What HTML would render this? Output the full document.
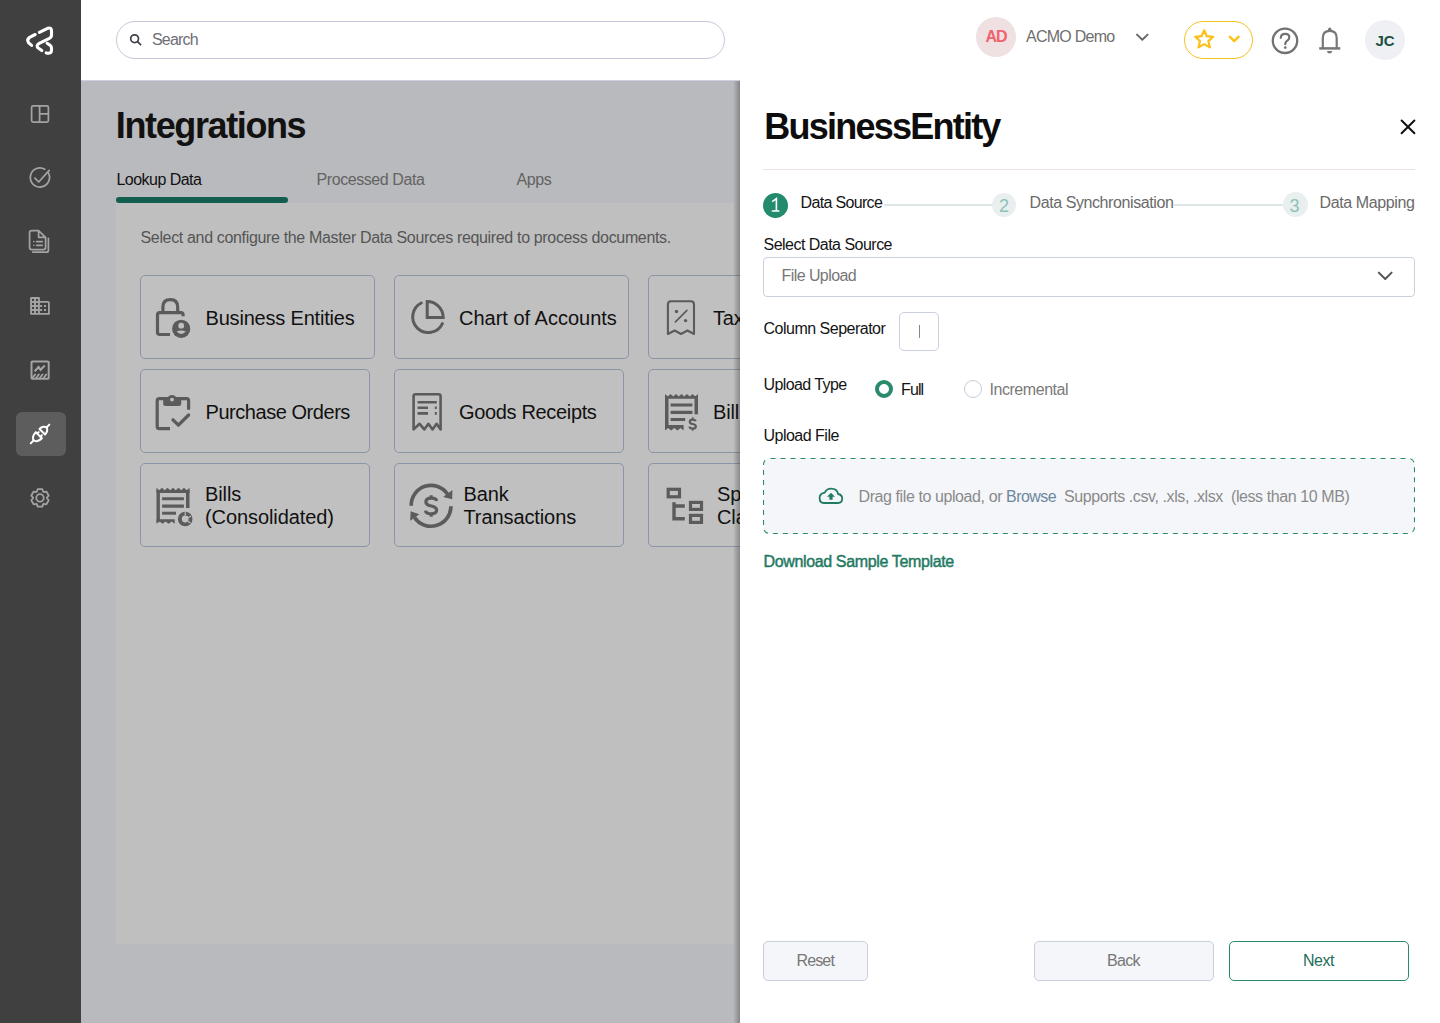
<!DOCTYPE html>
<html><head><meta charset="utf-8">
<style>
*{box-sizing:border-box;margin:0;padding:0}
html,body{width:1440px;height:1023px;overflow:hidden;background:#fff;font-family:"Liberation Sans",sans-serif;}
.a{position:absolute}
.t{position:absolute;white-space:pre;line-height:1;font-family:"Liberation Sans",sans-serif}
#side{left:0;top:0;width:81px;height:1023px;background:#404040}
#head{left:81px;top:0;width:1359px;height:81px;background:#fff;border-bottom:1px solid #cbd1e2}
#main{left:81px;top:81px;width:659px;height:942px;background:#b9babd}
#card{left:116px;top:203px;width:618px;height:741px;background:#bfbfbf}
.tile{position:absolute;border:1px solid #8c95a8;border-radius:5px;background:#c0c0c0;height:84px}
.ttx{position:absolute;white-space:pre;line-height:1;font-size:20px;color:#111}
#drawer{left:740px;top:80px;width:700px;height:943px;background:#fff}
#shadow{left:733px;top:81px;width:7px;height:942px;background:linear-gradient(to right,rgba(0,0,0,0) 0%,rgba(0,0,0,0.03) 14%,rgba(0,0,0,0.12) 43%,rgba(0,0,0,0.2) 71%,rgba(0,0,0,0.28) 100%)}
.lbl{font-size:16px;color:#141414;letter-spacing:-0.52px}
.btn{position:absolute;top:941px;height:40px;border-radius:5px;border:1px solid #c9cede;background:#f5f6fa}
</style></head><body>

<!-- SIDEBAR -->
<div id="side" class="a"></div>

<!-- HEADER -->
<div id="head" class="a"></div>
<div class="a" style="left:116px;top:21px;width:609px;height:38px;border:1px solid #c5cadb;border-radius:19px"></div>
<div class="t" style="left:152px;top:31.7px;font-size:16px;color:#6e6e76;letter-spacing:-0.8px">Search</div>

<div class="a" style="left:976px;top:17px;width:40px;height:40px;border-radius:50%;background:#efe0e1"></div>
<div class="t" style="left:985.5px;top:29.3px;font-size:16px;font-weight:700;color:#f0626c;letter-spacing:-1px">AD</div>
<div class="t" style="left:1026px;top:28.9px;font-size:16px;color:#6f6f6f;letter-spacing:-0.75px">ACMO Demo</div>

<div class="a" style="left:1184px;top:21px;width:69px;height:38px;border:1px solid #f4c21e;border-radius:19px"></div>
<div class="a" style="left:1365px;top:20px;width:40px;height:40px;border-radius:50%;background:#eef0f4"></div>
<div class="t" style="left:1375.5px;top:32.6px;font-size:15px;font-weight:700;color:#1d4f42;letter-spacing:-0.1px">JC</div>

<!-- MAIN -->
<div id="main" class="a"></div>
<div id="card" class="a"></div>
<div class="t" style="left:115.8px;top:108.2px;font-size:36px;font-weight:700;color:#121212;letter-spacing:-1.38px">Integrations</div>
<div class="t" style="left:116.5px;top:172px;font-size:16px;color:#111;letter-spacing:-0.54px">Lookup Data</div>
<div class="t" style="left:316.5px;top:172px;font-size:16px;color:#636363;letter-spacing:-0.42px">Processed Data</div>
<div class="t" style="left:516.5px;top:172px;font-size:16px;color:#636363;letter-spacing:-0.37px">Apps</div>
<div class="a" style="left:116px;top:197px;width:172px;height:6px;border-radius:3px;background:#135f4f"></div>
<div class="t" style="left:140.5px;top:229.5px;font-size:16px;color:#555;letter-spacing:-0.34px">Select and configure the Master Data Sources required to process documents.</div>

<div class="tile" style="left:140px;top:275px;width:235px"></div>
<div class="tile" style="left:394px;top:275px;width:235px"></div>
<div class="tile" style="left:648px;top:275px;width:235px"></div>
<div class="tile" style="left:140px;top:369px;width:230px"></div>
<div class="tile" style="left:394px;top:369px;width:230px"></div>
<div class="tile" style="left:648px;top:369px;width:230px"></div>
<div class="tile" style="left:140px;top:463px;width:230px"></div>
<div class="tile" style="left:394px;top:463px;width:230px"></div>
<div class="tile" style="left:648px;top:463px;width:230px"></div>

<div class="ttx" style="left:205.5px;top:307.7px;letter-spacing:-0.19px">Business Entities</div>
<div class="ttx" style="left:459px;top:307.7px;letter-spacing:0px">Chart of Accounts</div>
<div class="ttx" style="left:713px;top:307.7px;letter-spacing:-0.2px">Tax</div>
<div class="ttx" style="left:205.5px;top:401.8px;letter-spacing:-0.45px">Purchase Orders</div>
<div class="ttx" style="left:459px;top:401.8px;letter-spacing:-0.34px">Goods Receipts</div>
<div class="ttx" style="left:713px;top:401.8px;letter-spacing:-0.2px">Bill</div>
<div class="ttx" style="left:205px;top:482.6px;line-height:23px;letter-spacing:-0.09px">Bills
(Consolidated)</div>
<div class="ttx" style="left:463.5px;top:482.6px;line-height:23px;letter-spacing:-0.1px">Bank
Transactions</div>
<div class="ttx" style="left:717px;top:482.6px;line-height:23px;letter-spacing:-0.1px">Sp
Cla</div>


<!-- ICONS MAIN -->
<svg class="a" style="left:0;top:0" width="1440" height="1023" viewBox="0 0 1440 1023" fill="none" stroke-linecap="round" stroke-linejoin="round">
 <!-- logo -->
 <g stroke="#fff" stroke-width="3.1">
  <path d="M35.2,34.5 L29.6,37.4 Q26.4,39.6 28.6,42.9 L31.6,45.4"/>
  <path d="M39.4,32.4 L47.6,28.3 Q51.5,26.9 51.5,31 L51.5,35 Q51.5,37.3 49.4,38.3 L39.2,43.4 Q35.3,45.8 38.6,48.3 L41.8,50.6"/>
  <path d="M47.1,43.3 L49.6,44.9 Q51.5,46 51.5,48 L51.5,50.6 Q51.3,53.4 47.6,53.2 L46.2,52.9"/>
 </g>
 <!-- sidebar icons -->
 <g stroke="#a3a3a3" stroke-width="1.75">
  <rect x="31.6" y="105.8" width="16.8" height="16.4" rx="1.6"/>
  <path d="M39.6,105.8 V122.2 M39.6,113.9 H48.4"/>
  <path d="M48.2,172.6 A9.6,9.6 0 1 1 44.8,169.2"/>
  <path d="M34.9,178.2 L38.7,182 L49.2,170.4"/>
  <path d="M38.6,230.6 H31.6 Q29.6,230.6 29.6,232.6 V247.6 Q29.6,249.6 31.6,249.6 H43.6 Q45.6,249.6 45.6,247.6 V237.3 Z M38.6,230.6 V237.3 H45.6"/>
  <path d="M32.8,252.2 H46.4 Q48.4,252.2 48.4,250.2 V238.4"/>
  <path d="M36.6,241.6 H42.2 M36.6,245.3 H42.2" stroke-width="1.8"/>
  <path d="M33.8,241.6 h0.1 M33.8,245.3 h0.1" stroke-width="1.6"/>
  <rect x="30.1" y="297.1" width="9.8" height="17.6" rx="1.2" fill="#a3a3a3" stroke="none"/>
  <path d="M32,299 h2v2h-2z M36,299 h2v2h-2z M32,303 h2v2h-2z M36,303 h2v2h-2z M32,306.9 h2v2h-2z M36,306.9 h2v2h-2z M32,310.9 h2v2h-2z M36,310.9 h2v2h-2z" fill="#404040" stroke="none"/>
  <path d="M39.7,301.9 H48 Q48.9,301.9 48.9,302.8 V313.8 H39.7" stroke-width="1.8" stroke-linejoin="miter"/>
  <path d="M40.1,305 h2v2h-2z M40.1,309 h2v2h-2z M44,305 h2v2h-2z M44,309 h2v2h-2z" fill="#a3a3a3" stroke="none"/>
  <rect x="31.5" y="361.5" width="17.2" height="17.2" rx="0.8" stroke-width="2"/>
  <path d="M34.7,371.2 L38.6,367 L40.6,369.8 L44.8,365.5" stroke-width="2.2" stroke-linejoin="miter" stroke-linecap="butt"/>
  <path d="M32.2,378.2 L35.2,374.4 M35.9,378.2 L38.9,374.4 M39.6,378.2 L42.6,374.4 M43.3,378.2 L46.3,374.4" stroke-width="1.7"/>
 </g>
 <rect x="16" y="412" width="50" height="44" rx="6" fill="#5d5d5d"/>
 <g stroke="#fff" stroke-width="2" transform="translate(40 434) rotate(-45)">
  <path d="M-13,0 H-9 M9.2,0 H13.2"/>
  <path d="M-1.6,-4.3 A7.3,4.3 0 0 0 -1.6,4.3 Z" />
  <path d="M-1.6,-2.2 H0.4 M-1.6,2.2 H0.4"/>
  <path d="M3.2,-3.9 A5.9,3.9 0 0 1 3.2,3.9 Z"/>
 </g>
 <g stroke="#a3a3a3" stroke-width="1.75">
  <path d="M36.82,491.66 L37.67,489.21 L42.33,489.21 L43.18,491.66 A7,7 0 0 1 43.81,492.03 L46.36,491.54 L48.69,495.57 L46.99,497.53 A7,7 0 0 1 46.99,498.27 L48.69,500.23 L46.36,504.26 L43.81,503.77 A7,7 0 0 1 43.18,504.14 L42.33,506.59 L37.67,506.59 L36.82,504.14 A7,7 0 0 1 36.19,503.77 L33.64,504.26 L31.31,500.23 L33.01,498.27 A7,7 0 0 1 33.01,497.53 L31.31,495.57 L33.64,491.54 L36.19,492.03 A7,7 0 0 1 36.82,491.66 Z" stroke-width="1.8"/>
  <circle cx="40" cy="497.9" r="3.7" stroke-width="1.8"/>
 </g>
 <!-- header icons -->
 <g stroke="#40404a" stroke-width="1.7">
  <circle cx="134.6" cy="38.7" r="3.9"/>
  <path d="M137.5,41.6 L140.6,44.7"/>
 </g>
 <path d="M1137,34.6 L1142.3,39.8 L1147.6,34.6" stroke="#6a6a6a" stroke-width="2"/>
 <path d="M1204.2,30.3 L1206.8,36.2 L1213.2,36.8 L1208.4,41.1 L1209.9,47.4 L1204.2,44.1 L1198.5,47.4 L1200,41.1 L1195.2,36.8 L1201.6,36.2 Z" stroke="#fcc116" stroke-width="2.2"/>
 <path d="M1229.2,36.2 L1234.2,41.2 L1239.2,36.2" stroke="#fcc116" stroke-width="2.4" stroke-linecap="butt"/>
 <g stroke="#727272" stroke-width="2.3">
  <circle cx="1285" cy="40.8" r="12.2"/>
  <path d="M1280.8,37.8 Q1281,33.9 1285.1,33.9 Q1289.3,33.9 1289.3,37.3 Q1289.3,39.5 1287,40.9 Q1285.2,42.1 1285.2,44.2" stroke-width="2.2"/>
  <path d="M1285.2,47.6 h.1" stroke-width="2.6"/>
 </g>
 <g stroke="#777" stroke-width="2.2" stroke-linecap="butt">
  <path d="M1319.2,48.4 H1340.3" stroke-width="2.5"/>
  <path d="M1322.8,48.4 V38 Q1322.8,30.8 1329.75,30.8 Q1336.7,30.8 1336.7,38 V48.4"/>
 </g>
 <circle cx="1329.75" cy="29.2" r="1.7" fill="#777"/>
 <path d="M1326.9,51 H1332.3 Q1331.8,53.6 1329.6,53.6 Q1327.4,53.6 1326.9,51 Z" fill="#777"/>
 <!-- tile icons -->
 <g stroke="#5b5b5b" stroke-width="3.2" stroke-linecap="butt" stroke-linejoin="miter">
  <!-- lock -->
  <path d="M183.1,316.3 V314.8 Q183.1,312.6 180.9,312.6 H159.7 Q157.5,312.6 157.5,314.8 V332.3 Q157.5,334.5 159.7,334.5 H170"/>
  <path d="M162.9,312.6 V307 Q162.9,299.6 170.3,299.6 Q177.7,299.6 177.7,307 V312.6"/>
  <!-- clipboard -->
  <path d="M188.6,409.7 V400.8 Q188.6,398.7 186.5,398.7 H159.3 Q157.2,398.7 157.2,400.8 V426.4 Q157.2,428.6 159.3,428.6 H170"/>
  <path d="M173,419.8 L178.4,425.2 L188.6,415" stroke-linecap="round" stroke-linejoin="round" stroke-width="3.3"/>
  <!-- pie -->
  <path d="M421.3,303 A15.6,15.6 0 1 0 442.4,323.6" stroke-width="3" stroke-linecap="round"/>
  <path d="M427.2,301.6 V317.6 H443.2 A16,16 0 0 0 427.2,301.6 Z" stroke-width="3"/>
  <!-- tax receipt -->
  <path d="M667.9,334 V304.5 Q667.9,301.3 671.1,301.3 H690.8 Q694,301.3 694,304.5 V334 L687.4,330.5 L681,334 L674.6,330.5 Z" stroke-width="2.1" stroke-linejoin="round"/>
  <path d="M675.4,321.8 L686.9,310.3" stroke-width="1.7" stroke-linecap="round"/>
  <!-- goods receipt -->
  <path d="M413.6,429.4 V396.2 Q413.6,394.2 415.6,394.2 H438.6 Q440.6,394.2 440.6,396.2 V429.4 L436.6,423.8 L432.5,429.4 L428.4,423.8 L424.3,429.4 L419.6,423.8 Z" stroke-width="2.6" stroke-linejoin="round"/>
  <path d="M417.6,402.3 H436.8 M417.6,407.8 H428 M417.6,413.4 H428 M434.8,407.8 H436.8 M434.8,413.4 H436.8" stroke-width="2.6"/>
  <!-- bills -->
  <path d="M670.6,405 H692.4 M670.6,412.3 H692.4" stroke-width="3.2"/>
  <path d="M670.6,419.5 H685.2" stroke-width="3"/>
  <path d="M692.7,417.3 V419 M692.7,429.1 V430.7" stroke-width="1.6"/>
  <path d="M695.6,421.3 Q695.2,419.6 692.7,419.6 Q689.8,419.6 689.8,421.8 Q689.8,423.6 692.7,424 Q695.8,424.4 695.8,426.4 Q695.8,428.6 692.7,428.6 Q689.8,428.6 689.4,426.6" stroke-width="2.2"/>
  <!-- bills consolidated -->
  <path d="M162.1,498.7 H183.9 M162.1,506.1 H183.9" stroke-width="3.1"/>
  <path d="M162.1,513.2 H176" stroke-width="3"/>
  <circle cx="185.2" cy="519" r="5.35" stroke-width="3.9"/>
  <!-- bank -->
  <path d="M411.2,505.8 A19.9,19.9 0 0 1 447.6,494.2" stroke-width="3.7"/>
  <path d="M450.9,506.3 A19.9,19.9 0 0 1 414.6,517.6" stroke-width="3.7"/>
  <!-- sp cla -->
  <rect x="668.2" y="489.3" width="11.3" height="7.5" stroke-width="3.2"/>
  <rect x="690.5" y="502.4" width="11" height="7" stroke-width="3.2"/>
  <rect x="690.5" y="515.4" width="11" height="7" stroke-width="3.2"/>
  <path d="M674,502.2 V518.8 H684.8 M674,506 H684.8" stroke-width="3.4"/>
 </g>
 <g fill="#5b5b5b">
  <circle cx="181.2" cy="328.8" r="9.1"/>
  <path d="M163.2,398 H181.2 V403.5 Q181.2,406 178.7,406 H165.7 Q163.2,406 163.2,403.5 Z"/>
  <circle cx="172" cy="399.6" r="4.6"/>
  
  <path d="M665.00,398.7 V394.1 L667.75,396.6 L670.50,394.1 L673.25,396.6 L676.00,394.1 L678.75,396.6 L681.50,394.1 L684.25,396.6 L687.00,394.1 L689.75,396.6 L692.50,394.1 L695.25,396.6 L698.00,394.1 V398.7 Z"/>
  <rect x="665" y="396" width="3.5" height="32"/>
  <rect x="694.5" y="396" width="3.5" height="18.3"/>
  <path d="M665.00,425 V430.4 L668.10,428 L671.20,430.4 L674.30,428 L677.40,430.4 L680.50,428 L683.60,430.4 V425 Z"/>
  <path d="M156.50,493 V487.8 L159.25,490.3 L162.00,487.8 L164.75,490.3 L167.50,487.8 L170.25,490.3 L173.00,487.8 L175.75,490.3 L178.50,487.8 L181.25,490.3 L184.00,487.8 L186.75,490.3 L189.50,487.8 V493 Z"/>
  <rect x="156.5" y="490" width="3.4" height="32"/>
  <rect x="186" y="490" width="3.5" height="18"/>
  <path d="M156.50,519.2 V523.8 L159.53,521.6 L162.57,523.8 L165.60,521.6 L168.63,523.8 L171.67,521.6 L174.70,523.8 V519.2 Z"/>
  <circle cx="676.5" cy="311.5" r="1.7"/>
  <circle cx="685.6" cy="320.6" r="1.7"/>
  
  
  
  
  <path d="M452.4,490 L452.2,499.3 L443.2,497 Z"/>
  <path d="M410.2,520.8 L410.6,511.3 L419.3,514.2 Z"/>
 </g>
 <g fill="#bfbfbf">
  <circle cx="172" cy="399.6" r="1.9"/>
 </g>
 <g stroke="#c0c0c0" stroke-width="1" fill="none">
  <circle cx="181.2" cy="325.8" r="0"/>
 </g>
 <g fill="#c0c0c0">
  <circle cx="181.2" cy="325.7" r="2.9"/>
  <path d="M176.6,331.6 Q181.2,329.4 185.8,331.6 Q183.6,334 181.2,334 Q178.8,334 176.6,331.6 Z"/>
 </g>
 
 <g stroke="#5b5b5b" fill="none" stroke-linecap="butt">
  <path d="M436.6,501 Q436.2,498.2 431.2,498.2 Q425.9,498.2 425.9,502.1 Q425.9,505 431.2,506 Q436.6,507 436.6,510 Q436.6,513.8 431.2,513.8 Q425.9,513.8 425.5,510.6" stroke-width="3.2"/>
  <path d="M431.2,495.2 V498.4 M431.2,513.6 V516.7" stroke-width="3"/>
 </g>
 <g stroke="#c0c0c0" stroke-width="1.2">
  <path d="M185.2,512.6 V514.8 M190.6,516.2 L188.6,517.4 M190,522.8 L188.4,521.6"/>
 </g>
</svg>

<!-- DRAWER -->
<div id="shadow" class="a"></div>
<div id="drawer" class="a"></div>
<div class="t" style="left:764.2px;top:109.4px;font-size:36px;font-weight:700;color:#0d0d0d;letter-spacing:-1.76px">BusinessEntity</div>
<div class="a" style="left:763px;top:169px;width:652px;height:1px;background:#ecdfe4"></div>

<div class="a" style="left:763px;top:192.6px;width:25px;height:25px;border-radius:50%;background:#248a6d"></div>
<div class="t" style="left:800.5px;top:195px;font-size:16px;color:#141414;letter-spacing:-0.66px">Data Source</div>
<div class="a" style="left:884px;top:204px;width:108px;height:1.5px;background:#dde6e6"></div>
<div class="a" style="left:992px;top:192.5px;width:24px;height:24px;border-radius:50%;background:#e9eeee"></div>
<div class="t" style="left:999px;top:197.3px;font-size:18px;color:#8dc2b6">2</div>
<div class="t" style="left:1029.5px;top:195px;font-size:16px;color:#6a6a6a;letter-spacing:-0.41px">Data Synchronisation</div>
<div class="a" style="left:1174px;top:204px;width:109px;height:1.5px;background:#dde6e6"></div>
<div class="a" style="left:1282.5px;top:192px;width:25px;height:25px;border-radius:50%;background:#e9eeee"></div>
<div class="t" style="left:1289.5px;top:197.3px;font-size:18px;color:#8dc2b6">3</div>
<div class="t" style="left:1319.5px;top:195px;font-size:16px;color:#6a6a6a;letter-spacing:-0.39px">Data Mapping</div>

<div class="t lbl" style="left:763.5px;top:236.7px">Select Data Source</div>
<div class="a" style="left:763px;top:257px;width:652px;height:40px;border:1px solid #cbd0de;border-radius:4px"></div>
<div class="t" style="left:781.5px;top:267.5px;font-size:16px;color:#777;letter-spacing:-0.57px">File Upload</div>

<div class="t lbl" style="left:763.5px;top:320.7px;letter-spacing:-0.5px">Column Seperator</div>
<div class="a" style="left:899px;top:312px;width:40px;height:39px;border:1px solid #cbd0de;border-radius:5px"></div>
<div class="a" style="left:918.5px;top:324.5px;width:1px;height:13px;background:#888"></div>

<div class="t lbl" style="left:763.5px;top:376.9px;letter-spacing:-0.59px">Upload Type</div>
<div class="a" style="left:875px;top:380px;width:18px;height:18px;border-radius:50%;border:4px solid #2a8a6e;background:#fff"></div>
<div class="t" style="left:901px;top:381.9px;font-size:16px;color:#141414;letter-spacing:-0.87px">Full</div>
<div class="a" style="left:964px;top:380px;width:18px;height:18px;border-radius:50%;border:1px solid #c8ccd8;background:#fff"></div>
<div class="t" style="left:989.5px;top:381.9px;font-size:16px;color:#7a7a7a;letter-spacing:-0.45px">Incremental</div>

<div class="t lbl" style="left:763.5px;top:427.9px;letter-spacing:-0.51px">Upload File</div>
<svg class="a" style="left:763px;top:458px" width="652" height="76"><rect x="0.5" y="0.5" width="651" height="75" rx="6" fill="#f5f6fa" stroke="#2a8a6e" stroke-width="1.1" stroke-dasharray="5 5" stroke-dashoffset="-1"/></svg>
<div class="t" style="left:858.5px;top:488.7px;font-size:16px;color:#8a8a8a;letter-spacing:-0.41px">Drag file to upload, or <span style="color:#6d889c;letter-spacing:-0.58px">Browse</span>  Supports .csv, .xls, .xlsx  (less than 10 MB)</div>

<div class="t" style="left:763.5px;top:553.5px;font-size:16px;font-weight:400;color:#1f7a62;letter-spacing:-0.36px;-webkit-text-stroke:0.45px #1f7a62">Download Sample Template</div>

<div class="btn" style="left:763px;width:105px"></div>
<div class="t" style="left:796.5px;top:952.6px;font-size:16px;color:#777;letter-spacing:-0.86px">Reset</div>
<div class="btn" style="left:1034px;width:180px"></div>
<div class="t" style="left:1107px;top:952.6px;font-size:16px;color:#777;letter-spacing:-0.72px">Back</div>
<div class="a" style="left:1229px;top:941px;width:180px;height:40px;border-radius:5px;border:1px solid #2a8a6e;background:#fff"></div>
<div class="t" style="left:1303px;top:952.6px;font-size:16px;color:#1e6e5a;letter-spacing:-0.45px">Next</div>


<!-- ICONS DRAWER -->
<svg class="a" style="left:0;top:0" width="1440" height="1023" viewBox="0 0 1440 1023" fill="none" stroke-linecap="round" stroke-linejoin="round">
 <path d="M1401.6,120.5 L1414.4,133.3 M1414.4,120.5 L1401.6,133.3" stroke="#111" stroke-width="2"/>
 <path d="M772.2,201.6 L776.4,198.6 V211 M771.8,211 H779.4" stroke="#fff" stroke-width="1.6" stroke-linecap="butt" stroke-linejoin="miter"/>
 <path d="M1378.8,272.6 L1385.2,279 L1391.6,272.6" stroke="#555" stroke-width="2"/>
 <g stroke="#217a62" stroke-width="1.8">
  <path d="M823.8,503 H838 Q842.2,503 842.2,498.6 Q842.2,494.6 838,494 Q837.4,488.6 831,488.6 Q826.6,488.6 824.8,492.6 Q819.6,493.2 819.6,498 Q819.6,503 823.8,503 Z"/>
 </g>
 <path d="M827,496.8 L831,492.8 L835,496.8 Z M829.4,496.6 H832.6 V499.8 H829.4 Z" fill="#217a62"/>
</svg>

</body></html>
